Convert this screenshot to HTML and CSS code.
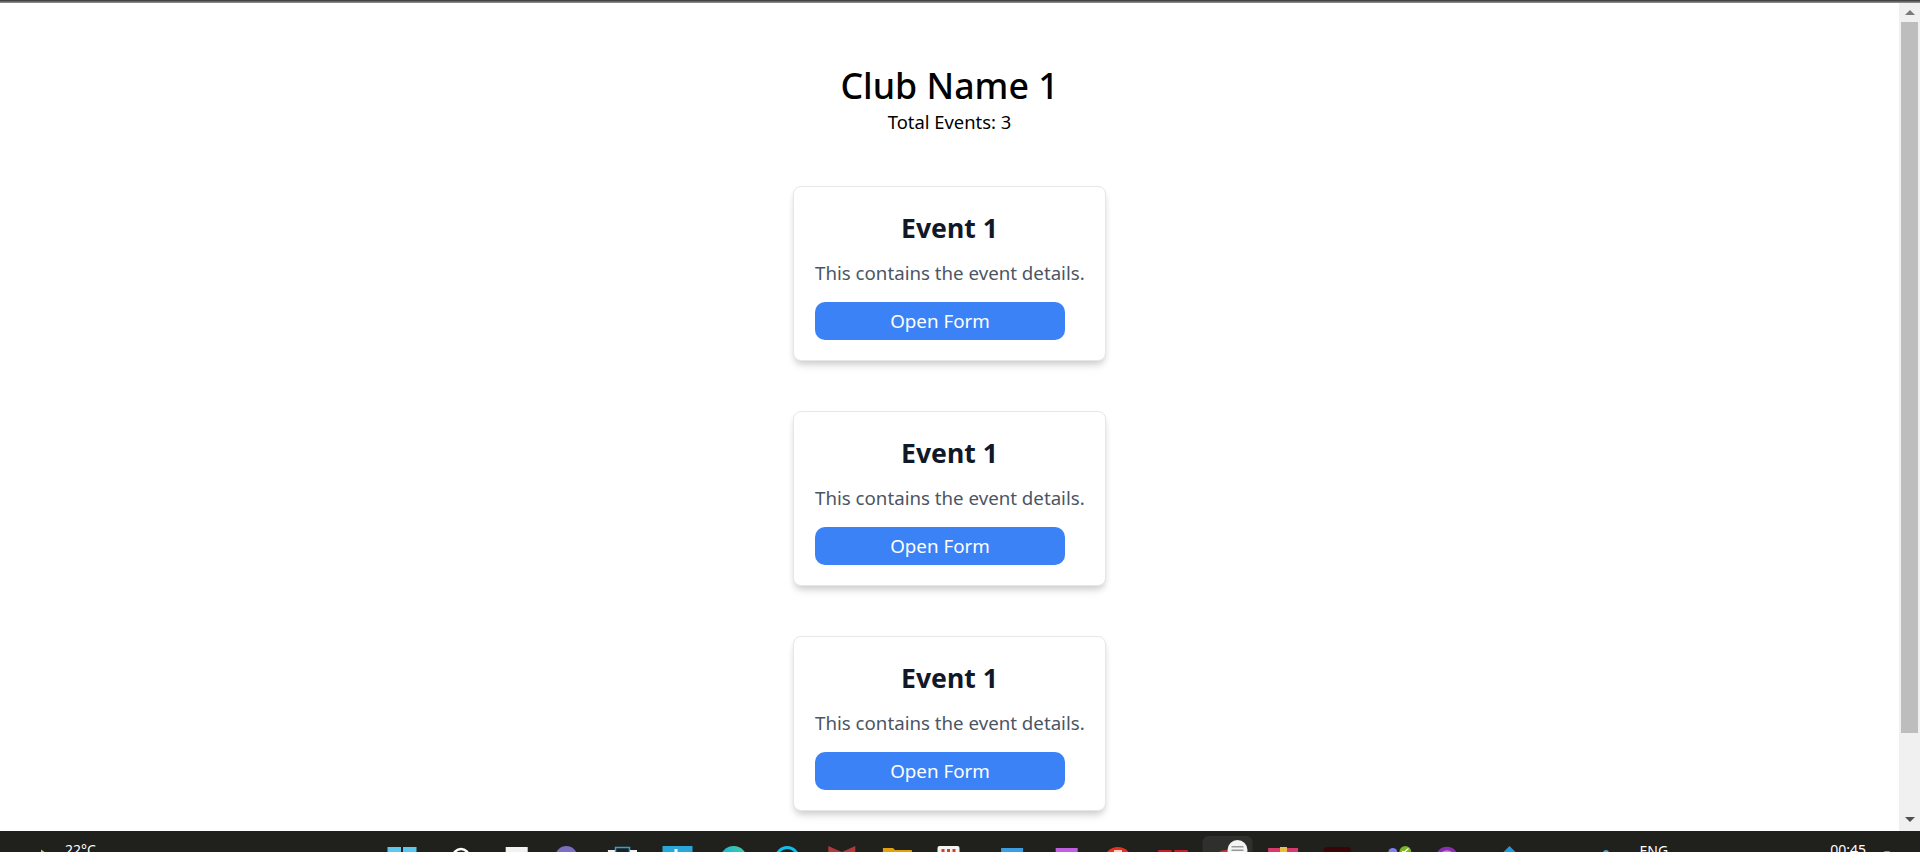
FILE: index.html
```html
<!DOCTYPE html>
<html lang="en">
<head>
    <meta charset="UTF-8">
    <title>Club Name 1</title>
    <link rel="stylesheet" href="styles.css">
</head>
<body>

<div class="top-edge"></div>

<div class="window">
    <main class="content">
        <header class="club-header">
            <h1>Club Name 1</h1>
            <p>Total Events: 3</p>
        </header>

        <section class="card">
            <h2>Event 1</h2>
            <p>This contains the event details.</p>
            <button>Open Form</button>
        </section>

        <section class="card">
            <h2>Event 1</h2>
            <p>This contains the event details.</p>
            <button>Open Form</button>
        </section>

        <section class="card">
            <h2>Event 1</h2>
            <p>This contains the event details.</p>
            <button>Open Form</button>
        </section>
    </main>

    <div class="scrollbar">
        <span class="arrow-up"></span>
        <div class="track"><div class="thumb"></div></div>
        <span class="arrow-down"></span>
    </div>
</div>

<footer class="taskbar">
    <div class="weather">
        <svg class="sun" viewBox="0 0 8 6"><polygon points="0,0 8,6 0,6" fill="#e8c53a"/></svg>
        <span>22°C</span>
    </div>

    <!-- Taskbar icons, only the top of each one is visible -->
    <div class="task-icons">
        <svg viewBox="0 0 55 21"><rect x="13.5" y="16" width="13.5" height="5" fill="#5cc8f0"/><rect x="29" y="16" width="13.5" height="5" fill="#5cc8f0"/></svg>
        <svg viewBox="0 0 55 21"><circle cx="31" cy="26" r="8" fill="none" stroke="#fff" stroke-width="2.5"/></svg>
        <svg viewBox="0 0 55 21"><rect x="20.7" y="16" width="22" height="5" fill="#f2f2f2"/></svg>
        <svg viewBox="0 0 55 21"><circle cx="26.3" cy="26" r="11" fill="#7b6fc0"/></svg>
        <svg viewBox="0 0 55 21"><rect x="19.5" y="16.5" width="14" height="8" fill="none" stroke="#1ea7ee" stroke-width="1.5"/><rect x="11.9" y="19" width="7" height="2" fill="#f2f2f2"/><rect x="34" y="19" width="7" height="2" fill="#f2f2f2"/></svg>
        <svg viewBox="0 0 55 21"><rect x="11.5" y="15" width="30" height="6" fill="#2aa7d8"/><rect x="23.5" y="18" width="3" height="3" fill="#fff"/></svg>
        <svg viewBox="0 0 55 21">
            <defs><linearGradient id="edge" x1="0" y1="1" x2="1" y2="0"><stop offset="0.4" stop-color="#18b4d4"/><stop offset="1" stop-color="#4fd0a0"/></linearGradient></defs>
            <circle cx="26.6" cy="28.5" r="13.5" fill="url(#edge)"/>
        </svg>
        <svg viewBox="0 0 55 21"><circle cx="25.2" cy="27.5" r="11" fill="none" stroke="#12bfe8" stroke-width="3"/></svg>
        <svg viewBox="0 0 55 21"><polygon points="11.3,15 24.8,21 38.3,15 38.3,21 11.3,21" fill="#b23a3a"/></svg>
        <svg viewBox="0 0 55 21"><polygon points="9.9,17 20,17 22,19 38.9,19 38.9,21 9.9,21" fill="#e0a20e"/></svg>
        <svg viewBox="0 0 55 21"><rect x="9.5" y="15" width="22" height="10" rx="2" fill="#f4f4f4"/><rect x="13.5" y="18" width="3" height="3" fill="#d8401e"/><rect x="19" y="18" width="3" height="3" fill="#d8401e"/><rect x="24.5" y="18" width="3" height="3" fill="#d8401e"/></svg>
        <svg viewBox="0 0 55 21"><rect x="17.1" y="17" width="22" height="4" fill="#3c9de0"/></svg>
        <svg viewBox="0 0 55 21"><rect x="16.7" y="17" width="22" height="4" fill="#c060e0"/></svg>
        <svg viewBox="0 0 55 21"><circle cx="23.8" cy="30" r="14" fill="#e8321e"/><rect x="20" y="19" width="8" height="2" fill="#f7d0c8"/></svg>
        <svg viewBox="0 0 55 21"><rect x="7.9" y="19" width="14" height="2" rx="1" fill="#c81e28"/><rect x="24" y="19" width="14" height="2" rx="1" fill="#c81e28"/></svg>
        <svg viewBox="0 0 55 21"><rect x="-2.5" y="5" width="50" height="22" rx="6" fill="#2f2f2d"/><circle cx="20.5" cy="31" r="12" fill="#c8342c"/><circle cx="32.5" cy="19" r="10" fill="#f4f4f4"/><rect x="26.5" y="15" width="12" height="1.5" fill="#9a9a9a"/><rect x="26.5" y="18.5" width="12" height="1.5" fill="#9a9a9a"/></svg>
        <svg viewBox="0 0 55 21"><rect x="7.1" y="17" width="30" height="4" fill="#d83a6e"/><rect x="19" y="16" width="7" height="5" fill="#e8c040"/></svg>
        <svg viewBox="0 0 55 21"><rect x="7.7" y="16" width="27" height="9" rx="3" fill="#3a0508"/></svg>
        <svg viewBox="0 0 55 21"><circle cx="21.8" cy="21.5" r="4.5" fill="#7b83eb"/><circle cx="34.3" cy="21" r="6" fill="#7ab51d"/><polyline points="31,20.5 33.5,21 37.5,17.5" fill="none" stroke="#fff" stroke-width="1.3"/></svg>
        <svg viewBox="0 0 55 21"><circle cx="19.9" cy="27" r="9.5" fill="#b98ad0" stroke="#8b2fb0" stroke-width="3.5"/></svg>
        <svg viewBox="0 0 55 21"><polygon points="27.5,15 35.5,23 19.5,23" fill="#1e9be0"/></svg>
    </div>

    <div class="tray">
        <span class="tray-dot"></span>
        <span class="lang">ENG</span>
        <span class="clock">00:45</span>
        <span class="tray-dot tray-dot-low"></span>
    </div>
</footer>

</body>
</html>
```

FILE: styles.css
```css
* {
    box-sizing: border-box;
}
html, body {
    height: 100%;
}
body {
    margin: 0;
    display: flex;
    flex-direction: column;
    overflow: hidden;
    background-color: #fff;
    font-family: "Noto Sans", "Open Sans", sans-serif;
}
.top-edge {
    height: 3px;
    background: linear-gradient(#333, #999);
}
.window {
    flex: 1;
    display: flex;
    min-height: 0;
}
.content {
    flex: 1;
    display: flex;
    flex-direction: column;
    align-items: center;
    padding-top: 62px;
    overflow: hidden;
}
.club-header {
    text-align: center;
    margin-bottom: 52px;
}
.club-header h1 {
    margin: 0 0 5px;
    font-size: 35.7px;
    line-height: 40px;
    font-weight: 500;
    color: #000;
}
.club-header p {
    margin: 0;
    font-size: 18.4px;
    line-height: 24px;
    color: #000;
}
.card {
    flex: none;
    width: 313px;
    height: 175px;
    margin-bottom: 50px;
    padding: 23px 21px;
    background-color: #fff;
    border: 1px solid #e5e7eb;
    border-radius: 8px;
    box-shadow: 0 4px 6px -1px rgba(0, 0, 0, 0.15), 0 8px 12px -4px rgba(0, 0, 0, 0.08);
    text-align: center;
}
.card h2 {
    margin: 0 0 13px;
    font-size: 26.6px;
    line-height: 36px;
    font-weight: 700;
    color: #111827;
}
.card p {
    margin: 0 0 15px;
    font-size: 18.7px;
    line-height: 28px;
    color: #4b5563;
    white-space: nowrap;
}
.card button {
    display: block;
    width: 250px;
    height: 38px;
    border: none;
    border-radius: 10px;
    background-color: #3b82f6;
    color: #fff;
    font-family: inherit;
    font-size: 18.8px;
}
.scrollbar {
    width: 21px;
    display: flex;
    flex-direction: column;
    align-items: center;
    background-color: #f0f0f0;
}
.track {
    flex: 1;
    width: 100%;
    padding: 7px 2px 0;
}
.thumb {
    height: 711px;
    background-color: #bdbdbd;
}
.arrow-up, .arrow-down {
    width: 0;
    height: 0;
    border-left: 5px solid transparent;
    border-right: 5px solid transparent;
}
.arrow-up {
    margin-top: 7px;
    border-bottom: 5px solid #7a7a7a;
}
.arrow-down {
    margin-bottom: 9px;
    border-top: 5px solid #505050;
}
.taskbar {
    height: 21px;
    flex: none;
    display: flex;
    overflow: hidden;
    background-color: #20201d;
    color: #fff;
    font-size: 14px;
    line-height: 20px;
}
.weather {
    width: 374.3px;
    flex: none;
    display: flex;
    align-items: flex-start;
    gap: 17px;
    padding: 9px 0 0 41px;
}
.sun {
    width: 7px;
    height: 6px;
    margin-top: 9px;
}
.task-icons {
    flex: none;
    display: grid;
    grid-template-columns: repeat(21, 55.4px);
}
.task-icons svg {
    width: 55px;
    height: 21px;
    overflow: visible;
}
.tray {
    flex: 1;
    display: flex;
    align-items: flex-start;
    padding-left: 65px;
}
.tray-dot {
    width: 6px;
    height: 4px;
    margin-top: 19px;
    border-radius: 3px 3px 0 0;
    background-color: #4aa8d8;
}
.lang {
    margin: 10px 0 0 31px;
}
.clock {
    margin: 9px 0 0 162px;
}
.tray-dot-low {
    width: 8px;
    margin: 20px 0 0 17px;
}
```
